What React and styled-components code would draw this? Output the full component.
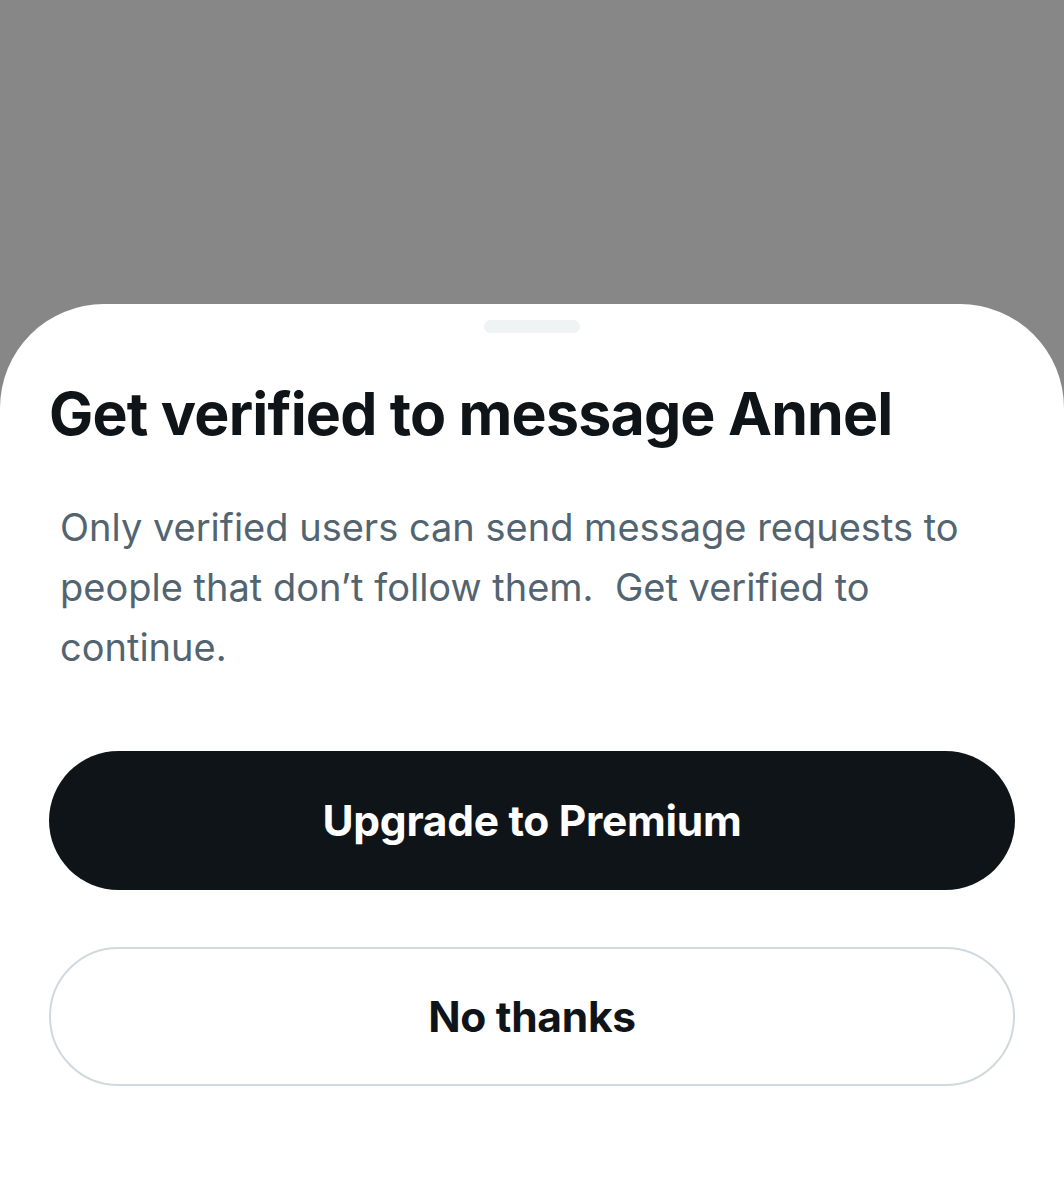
import React from 'react'
import styled, { createGlobalStyle } from 'styled-components'

const GlobalStyle = createGlobalStyle`
  html, body {
    margin: 0;
    padding: 0;
    background: #878787;
  }
  body {
    font-family: Inter, "Noto Sans", "Liberation Sans", sans-serif;
    -webkit-font-smoothing: antialiased;
  }
`

const Screen = styled.div`
  width: 1064px;
  height: 1200px;
  display: flex;
  flex-direction: column;
  justify-content: flex-end;
  background: #878787;
  overflow: hidden;
`

const Sheet = styled.div`
  height: 896px;
  background: #ffffff;
  border-radius: 104px 104px 0 0;
  display: flex;
  flex-direction: column;
  padding: 0 49px;
`

const HandleRow = styled.div`
  display: flex;
  justify-content: center;
  padding-top: 16px;
`

const Handle = styled.div`
  width: 96px;
  height: 13px;
  border-radius: 7px;
  background: #eff3f4;
`

const Title = styled.h1`
  margin: 45px 0 0 0;
  font-size: 59px;
  font-weight: 700;
  letter-spacing: -0.8px;
  line-height: 72px;
  color: #0f1419;
`

const Body = styled.p`
  margin: 47px 0 0 11px;
  font-size: 38px;
  font-weight: 400;
  line-height: 60px;
  color: #536471;
  max-width: 910px;
`

const Actions = styled.div`
  display: flex;
  flex-direction: column;
  gap: 57px;
  margin-top: 74px;
`

const Button = styled.button`
  width: 966px;
  height: 139px;
  border-radius: 70px;
  border: ${(p) => (p.$primary ? 'none' : '2px solid #cfd9de')};
  background: ${(p) => (p.$primary ? '#0f1419' : '#ffffff')};
  color: ${(p) => (p.$primary ? '#ffffff' : '#0f1419')};
  font-family: Inter, "Noto Sans", "Liberation Sans", sans-serif;
  font-size: 42.5px;
  font-weight: 700;
  letter-spacing: -0.3px;
  display: flex;
  align-items: center;
  justify-content: center;
  cursor: pointer;
`

export default function App() {
  return (
    <>
      <GlobalStyle />
      <Screen>
        <Sheet>
          <HandleRow>
            <Handle />
          </HandleRow>
          <Title>Get verified to message Annel</Title>
          <Body>
            Only verified users can send message requests to people that don’t
            follow them.&nbsp; Get verified to continue.
          </Body>
          <Actions>
            <Button $primary>Upgrade to Premium</Button>
            <Button>No thanks</Button>
          </Actions>
        </Sheet>
      </Screen>
    </>
  )
}
